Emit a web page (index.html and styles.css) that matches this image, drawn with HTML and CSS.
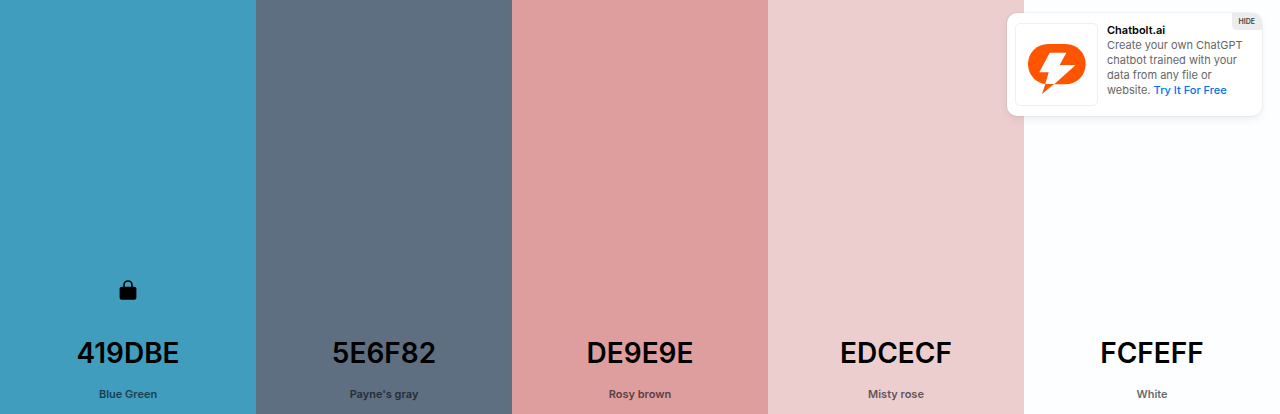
FILE: index.html
```html
<!DOCTYPE html>
<html lang="en">
<head>
<meta charset="utf-8">
<title>Color palette</title>
<link rel="stylesheet" href="styles.css">
</head>
<body>
<main class="palette">
  <section class="swatch swatch-blue">
    <button class="lock" type="button" aria-label="Unlock color">
      <svg width="18" height="20" viewBox="0 0 18 20" aria-hidden="true">
        <path d="M5 8V5a4 4 0 0 1 8 0v3" fill="none" stroke="#000" stroke-width="1.6"/>
        <rect x="0.6" y="6.8" width="16.8" height="13" rx="2"/>
      </svg>
    </button>
    <button class="hex" type="button">419DBE</button>
    <button class="name" type="button">Blue Green</button>
  </section>
  <section class="swatch swatch-gray">
    <button class="hex" type="button">5E6F82</button>
    <button class="name" type="button">Payne's gray</button>
  </section>
  <section class="swatch swatch-brown">
    <button class="hex" type="button">DE9E9E</button>
    <button class="name" type="button">Rosy brown</button>
  </section>
  <section class="swatch swatch-rose">
    <button class="hex" type="button">EDCECF</button>
    <button class="name" type="button">Misty rose</button>
  </section>
  <section class="swatch swatch-white">
    <button class="hex" type="button">FCFEFF</button>
    <button class="name" type="button">White</button>
  </section>
</main>
<aside class="promo">
  <div class="promo-logo">
    <svg width="58" height="51" viewBox="53 87 174 153" aria-hidden="true">
      <rect x="53" y="87" width="173" height="121" rx="60" fill="#ff5500"/>
      <path d="M118 113h50l-20 37h48l-67 60h-25l11-38H87z" fill="#fff"/>
      <path d="M105 207h26l-36 30z" fill="#ff5500"/>
    </svg>
  </div>
  <div class="promo-text">
    <strong class="promo-title">Chatbolt.ai</strong>
    <p class="promo-copy">Create your own ChatGPT chatbot trained with your data from any file or website. <a class="promo-link" href="#">Try It For Free</a></p>
  </div>
  <button class="promo-hide" type="button">HIDE</button>
</aside>
</body>
</html>
```
FILE: styles.css
```css
* { box-sizing: border-box; }
body {
  margin: 0;
  font-family: Inter, "Liberation Sans", sans-serif;
  color: #000;
}
button {
  padding: 0;
  border: 0;
  background: none;
  font: inherit;
  color: inherit;
  cursor: pointer;
}
.palette {
  display: grid;
  grid-template-columns: repeat(5, 1fr);
  min-height: 100vh;
}
.swatch {
  display: flex;
  flex-direction: column;
  align-items: center;
  justify-content: flex-end;
  padding-bottom: 11px;
}
.swatch-blue { background: #419dbe; }
.swatch-gray { background: #5e6f82; }
.swatch-brown { background: #de9e9e; }
.swatch-rose { background: #edcecf; }
.swatch-white { background: #fcfeff; }
.lock {
  display: flex;
  margin-bottom: 32px;
}
.hex {
  font-size: 28px;
  font-weight: 600;
  line-height: 42px;
}
.name {
  margin-top: 11px;
  font-size: 11px;
  font-weight: 600;
  line-height: 18px;
  opacity: 0.6;
}
.promo {
  position: absolute;
  top: 13px;
  right: 18px;
  display: flex;
  gap: 9px;
  width: 255px;
  padding: 10px 8px;
  border-radius: 10px;
  background: #fff;
  box-shadow: 0 0 0 1px rgba(0, 0, 0, 0.04), 0 4px 8px rgba(0, 0, 0, 0.06);
}
.promo-logo {
  display: flex;
  flex: none;
  align-items: center;
  justify-content: center;
  width: 83px;
  height: 83px;
  padding-top: 10px;
  border: 1px solid #f0f0f0;
  border-radius: 5px;
}
.promo-text {
  font-size: 11px;
  line-height: 15px;
}
.promo-title {
  display: block;
  font-weight: 600;
}
.promo-copy {
  margin: 0;
  color: #666;
}
.promo-link {
  color: #0070f3;
  font-weight: 500;
  text-decoration: none;
}
.promo-hide {
  position: absolute;
  top: 0;
  right: 0;
  padding: 1px 7px 0;
  border-radius: 0 10px 0 5px;
  background: #ececed;
  color: #444;
  font-size: 7px;
  font-weight: 600;
  line-height: 16px;
}
```
